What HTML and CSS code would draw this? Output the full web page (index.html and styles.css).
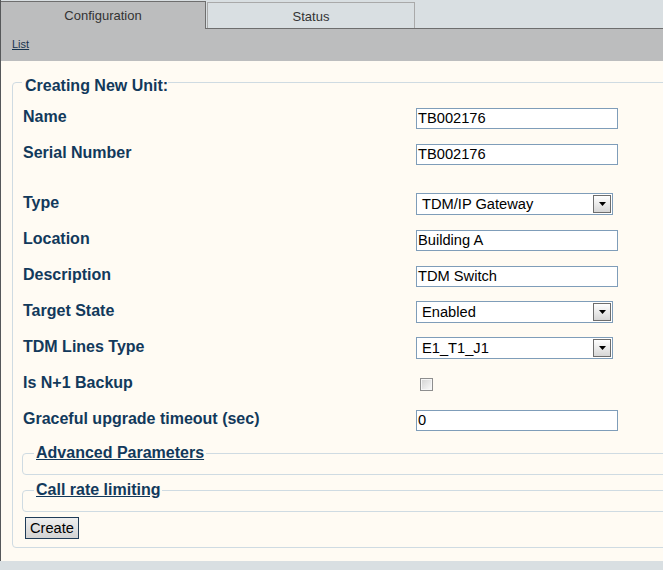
FILE: index.html
```html
<!DOCTYPE html>
<html>
<head>
<meta charset="utf-8">
<title>Creating New Unit</title>
<link rel="stylesheet" href="styles.css">
</head>
<body>
<div class="page">
  <div class="tabbar">
    <div class="tab tab-active">Configuration</div>
    <div class="tab tab-inactive">Status</div>
  </div>
  <div class="subbar"><a class="link" href="#">List</a></div>
  <div class="content">
    <fieldset class="unit">
      <legend class="unit-legend">Creating New Unit:</legend>
      <div class="row"><span class="label">Name</span><div class="field">TB002176</div></div>
      <div class="row"><span class="label">Serial Number</span><div class="field">TB002176</div></div>
      <div class="row row-gap"><span class="label">Type</span><div class="select"><span class="select-text">TDM/IP Gateway</span><span class="select-btn"><svg width="7" height="4" viewBox="0 0 7 4"><path d="M0 0h7L3.5 4z" fill="#000"/></svg></span></div></div>
      <div class="row"><span class="label">Location</span><div class="field">Building A</div></div>
      <div class="row"><span class="label">Description</span><div class="field">TDM Switch</div></div>
      <div class="row"><span class="label">Target State</span><div class="select"><span class="select-text">Enabled</span><span class="select-btn"><svg width="7" height="4" viewBox="0 0 7 4"><path d="M0 0h7L3.5 4z" fill="#000"/></svg></span></div></div>
      <div class="row"><span class="label">TDM Lines Type</span><div class="select"><span class="select-text">E1_T1_J1</span><span class="select-btn"><svg width="7" height="4" viewBox="0 0 7 4"><path d="M0 0h7L3.5 4z" fill="#000"/></svg></span></div></div>
      <div class="row"><span class="label">Is N+1 Backup</span><span class="checkbox"></span></div>
      <div class="row"><span class="label">Graceful upgrade timeout (sec)</span><div class="field">0</div></div>
      <fieldset class="section"><legend class="section-legend"><a class="section-link" href="#">Advanced Parameters</a></legend></fieldset>
      <fieldset class="section"><legend class="section-legend"><a class="section-link" href="#">Call rate limiting</a></legend></fieldset>
      <button class="btn" type="button">Create</button>
    </fieldset>
  </div>
</div>
</body>
</html>
```
FILE: styles.css
```css
html, body {
  margin: 0;
  padding: 0;
}
body {
  background: #d9dfe2;
  font-family: "Liberation Sans", Arial, sans-serif;
  height: 570px;
  overflow: hidden;
}
.page {
  border-left: 1px solid #56585a;
}
.tabbar {
  display: flex;
  align-items: flex-start;
  height: 28px;
  border-bottom: 1px solid #6e6e6e;
  background: #d9dfe2;
}
.tab {
  box-sizing: border-box;
  display: flex;
  align-items: center;
  justify-content: center;
  font-size: 13px;
  color: #333;
}
.tab-active {
  margin-top: 1px;
  width: 205px;
  height: 28px;
  border-top: 1px solid #6e6e6e;
  border-right: 1px solid #6e6e6e;
  background: #bcbdbe;
}
.tab-inactive {
  margin-top: 2px;
  margin-left: 1px;
  width: 208px;
  height: 26px;
  padding-top: 2px;
  border: 1px solid #a9a9a9;
  border-bottom: none;
  background: #d9dfe2;
}
.subbar {
  box-sizing: border-box;
  height: 32px;
  background: #bcbdbe;
  display: flex;
  align-items: center;
  padding: 0 0 2px 11px;
}
.link {
  font-size: 11px;
  color: #17344f;
  text-decoration: underline;
}
.content {
  background: #fffbf3;
  padding: 8px 0 13px 11px;
  overflow: hidden;
}
.unit {
  margin: 0 -40px 0 0;
  padding: 5px 0 8px 9px;
  border: 1px solid #cfdbe2;
  border-radius: 4px;
  min-width: 0;
}
.unit-legend {
  padding: 7px 0 0 3px;
  font-size: 16px;
  line-height: 19px;
  font-weight: bold;
  color: #12395b;
}
.row {
  display: grid;
  grid-template-columns: 394px 1fr;
  align-items: center;
  height: 36px;
}
.row-gap {
  margin-top: 14px;
}
.label {
  padding-left: 1px;
  margin-bottom: 3px;
  font-size: 16px;
  line-height: 18px;
  font-weight: bold;
  color: #12395b;
}
.field {
  box-sizing: border-box;
  width: 202px;
  height: 21px;
  padding: 0 1px;
  border: 1px solid #7f9db9;
  background: #fff;
  font-size: 14.67px;
  line-height: 19px;
  color: #000;
}
.select {
  box-sizing: border-box;
  width: 197px;
  height: 22px;
  padding: 1px;
  border: 1px solid #7f9db9;
  background: #fff;
  display: flex;
  align-items: center;
  justify-content: space-between;
}
.select-text {
  padding-left: 4px;
  font-size: 14.67px;
  color: #000;
}
.select-btn {
  box-sizing: border-box;
  width: 18px;
  height: 18px;
  border: 1px solid #6d6d6d;
  background: linear-gradient(#ffffff, #d6d6d6);
  display: flex;
  align-items: center;
  justify-content: center;
}
.checkbox {
  box-sizing: border-box;
  margin-left: 4px;
  width: 13px;
  height: 13px;
  border: 1px solid #8e8e8e;
  box-shadow: inset 0 0 0 1px #f6f6f6;
  background: linear-gradient(135deg, #d2d2d2, #fbfbfb);
}
.section {
  margin: 6px 0 0 0;
  padding: 0 0 12px 11px;
  border: 1px solid #cfdbe2;
  border-radius: 4px;
  min-width: 0;
}
.section-legend {
  padding: 0 2px;
  font-size: 16px;
  line-height: 18px;
  font-weight: bold;
}
.section-link {
  color: #12395b;
  text-decoration: underline;
}
.btn {
  display: block;
  margin: 5px 0 0 3px;
  height: 22px;
  padding: 0 4px;
  border: 1px solid #1f3b57;
  border-radius: 0;
  background: linear-gradient(#eeeeee, #d3d3d3);
  font-family: "Liberation Sans", Arial, sans-serif;
  font-size: 14.67px;
  color: #000;
}
```
